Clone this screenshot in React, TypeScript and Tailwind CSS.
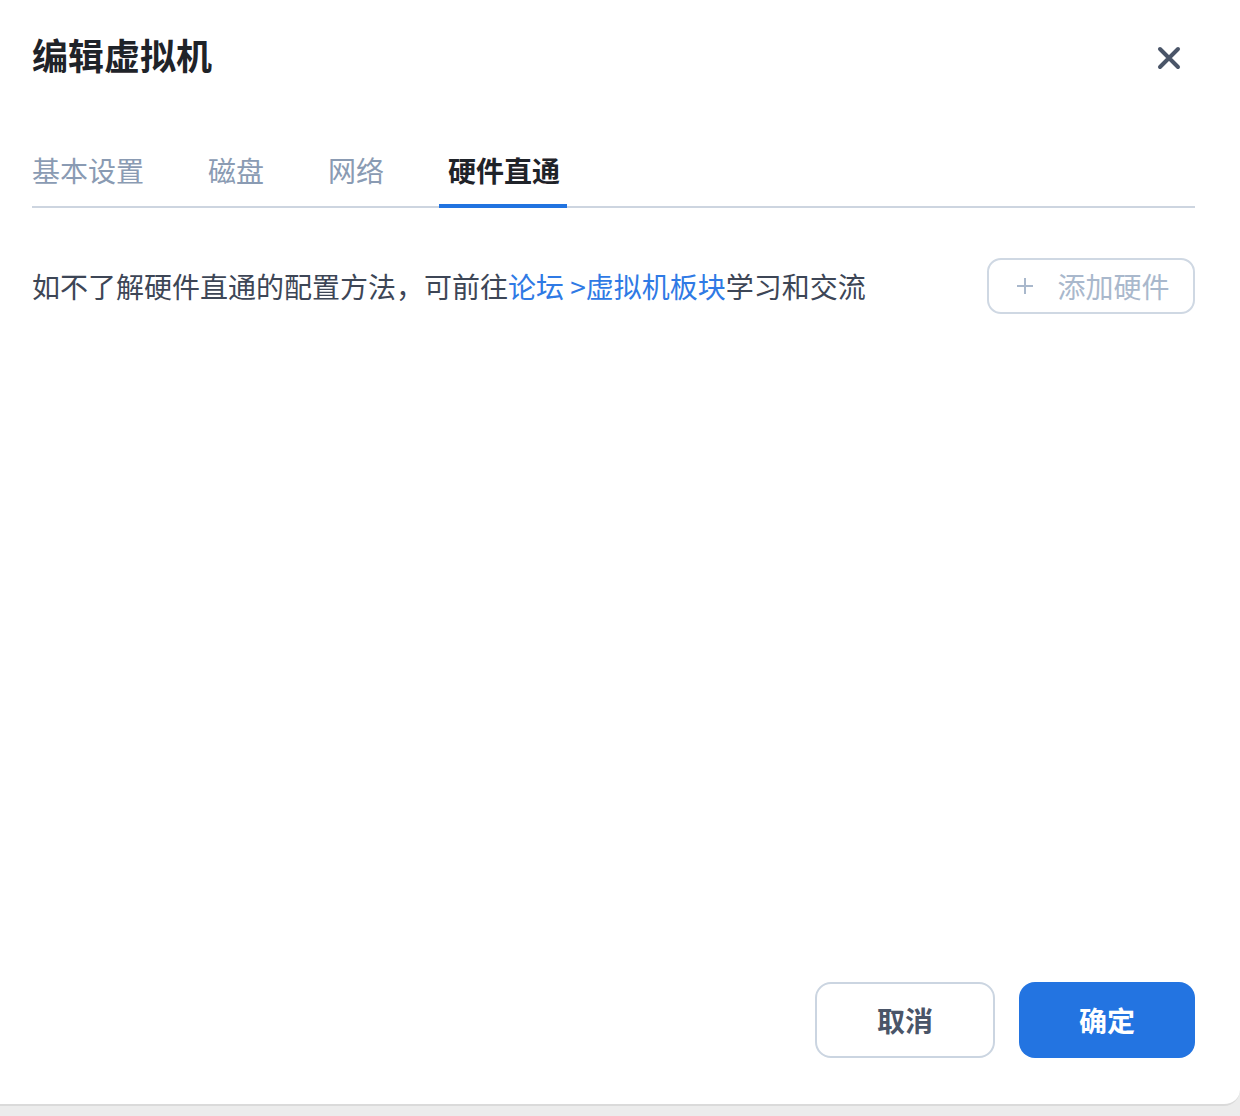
const tabs = ["基本设置", "磁盘", "网络", "硬件直通"];

export default function App() {
  const active = 3;

  return (
    <div
      className="h-[1116px] w-full overflow-hidden bg-[#ececec]"
      style={{ fontFamily: '"Noto Sans CJK SC", "Noto Sans", sans-serif' }}
    >
      <div className="flex h-[1106px] flex-col rounded-br-[16px] border-b-2 border-[#dadada] bg-white pl-[32px] pr-[45px] pb-[46px] pt-[32px]">
        {/* header */}
        <div className="flex items-center justify-between">
          <h1 className="text-[36px] font-bold leading-[44px] text-[#1f2329]">编辑虚拟机</h1>
          <button className="mr-[12px] mt-[8px] flex h-[28px] w-[28px] items-center justify-center text-[#4a5568]">
            <svg width="24" height="24" viewBox="0 0 24 24" fill="none" stroke="currentColor" strokeWidth="4" strokeLinecap="round">
              <path d="M3 3L21 21M21 3L3 21" />
            </svg>
          </button>
        </div>

        {/* tabs */}
        <div className="mt-[74px] flex gap-[64px] border-b-2 border-[#cdd5e0]">
          {tabs.map((t, i) => (
            <div
              key={t}
              className={`relative pb-[16px] text-[28px] leading-[40px] ${
                i === active ? "font-bold text-[#1f2329]" : "text-[#8a9bb3]"
              }`}
            >
              {t}
              {i === active && (
                <span className="absolute -bottom-[2px] -left-[9px] -right-[7px] h-[4px] bg-[#2173e0]" />
              )}
            </div>
          ))}
        </div>

        {/* content */}
        <div className="mt-[50px] flex items-center justify-between">
          <p className="text-[28px] leading-[40px] text-[#3d4656]">
            如不了解硬件直通的配置方法，可前往
            <a className="text-[#2f7ae5]">论坛 &gt;虚拟机板块</a>
            学习和交流
          </p>
          <button className="flex h-[56px] w-[208px] items-center justify-center gap-[23px] rounded-[14px] border-2 border-[#cfd8e3] pl-[4px] text-[28px] leading-[40px] text-[#a9b8cc]">
            <svg width="18" height="18" viewBox="0 0 18 18" fill="none" stroke="currentColor" strokeWidth="2">
              <path d="M9 1V17M1 9H17" />
            </svg>
            添加硬件
          </button>
        </div>

        {/* footer */}
        <div className="mt-auto flex justify-end gap-[24px]">
          <button className="h-[76px] w-[180px] rounded-[16px] border-2 border-[#cbd5e1] text-[28px] font-bold text-[#4a5568]">
            取消
          </button>
          <button className="h-[76px] w-[176px] rounded-[16px] bg-[#2374e1] text-[28px] font-bold text-white">
            确定
          </button>
        </div>
      </div>
    </div>
  );
}
